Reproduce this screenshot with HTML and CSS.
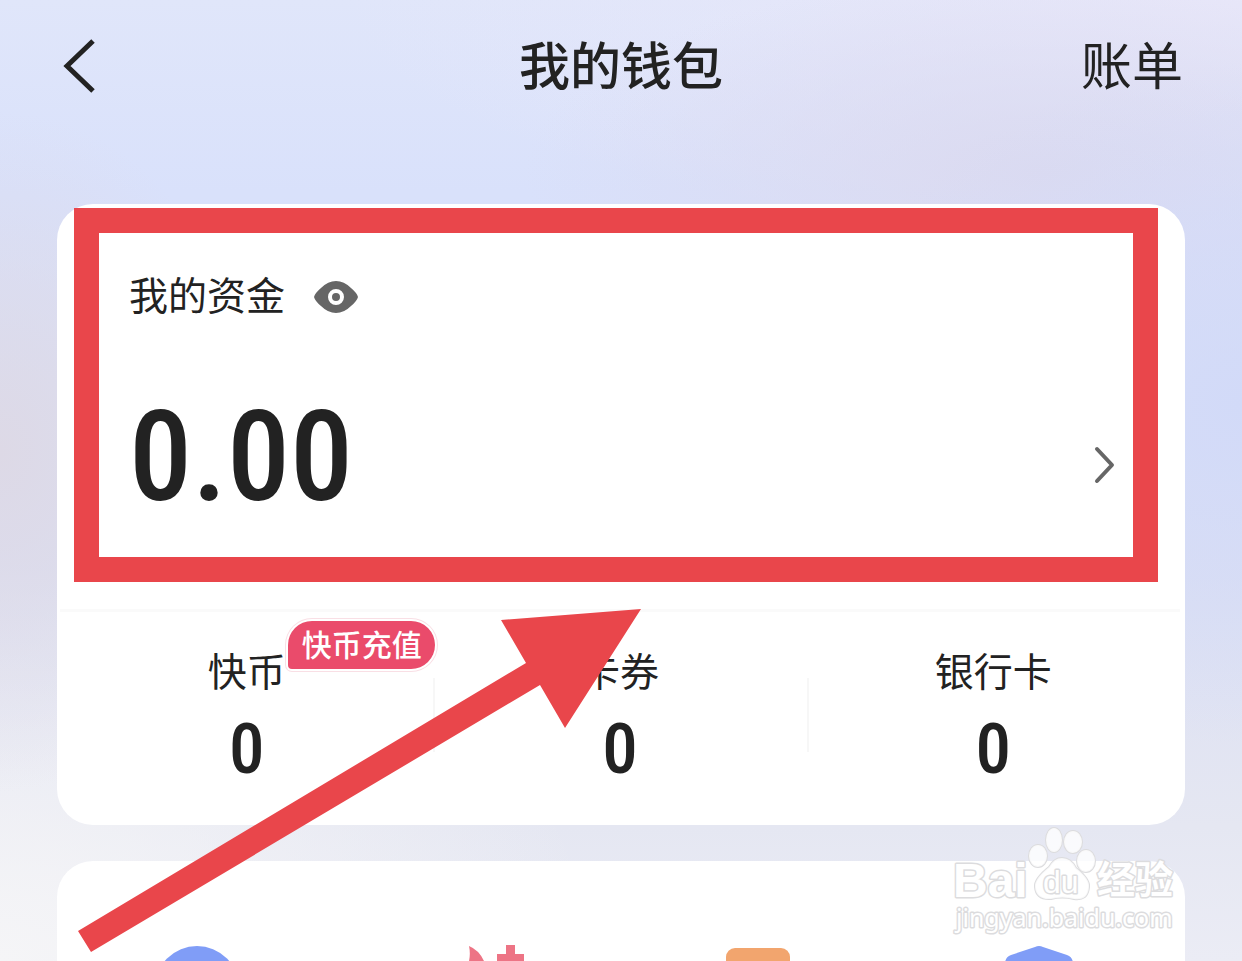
FILE: index.html
```html
<!DOCTYPE html>
<html lang="zh-CN">
<head>
    <meta charset="UTF-8">
    <meta name="viewport" content="width=device-width, initial-scale=1">
    <title>我的钱包</title>
    <link rel="stylesheet" href="styles.css">
</head>
<body>
<div class="page">

    <header class="topbar">
        <button class="back" type="button" aria-label="返回">
            <svg width="40" height="60" viewBox="0 0 40 60"><path d="M36 5 L10 30 L36 55" fill="none" stroke="#222" stroke-width="5"/></svg>
        </button>
        <h1>我的钱包</h1>
        <a class="bill" href="#">账单</a>
    </header>

    <main>
        <section class="card wallet">
            <div class="funds">
                <div class="funds-head">
                    <span>我的资金</span>
                    <button class="eye" type="button" aria-label="隐藏金额">
                        <svg width="44" height="34" viewBox="0 0 44 34">
                            <path d="M0 17 Q1 13 7 8 Q14 1 22 1 Q30 1 37 8 Q43 13 44 17 Q43 21 37 26 Q30 33 22 33 Q14 33 7 26 Q1 21 0 17 Z" fill="#666"/>
                            <circle cx="22" cy="17" r="6" fill="#666" stroke="#fff" stroke-width="4"/>
                        </svg>
                    </button>
                </div>
                <a class="funds-row" href="#" aria-label="资金明细">
                    <span class="amount">0.00</span>
                    <svg width="24" height="40" viewBox="0 0 24 40"><path d="M4 4 L19 20 L4 36" fill="none" stroke="#666" stroke-width="4" stroke-linecap="round" stroke-linejoin="round"/></svg>
                </a>
            </div>

            <div class="assets">
                <a class="asset" href="#">
                    <span class="label">快币<span class="badge">快币充值</span></span>
                    <span class="num">0</span>
                </a>
                <a class="asset" href="#">
                    <span class="label">卡券</span>
                    <span class="num">0</span>
                </a>
                <a class="asset" href="#">
                    <span class="label">银行卡</span>
                    <span class="num">0</span>
                </a>
            </div>

            <!-- marks drawn over the card -->
            <div class="frame"></div>
            <svg class="arrow" width="564" height="344" viewBox="0 0 564 344">
                <path d="M563 0 L423 11 L448 54 L0 322 L13 343 L462 76 L487 119 Z" fill="#e9464b"/>
            </svg>
        </section>

        <section class="card services">
            <svg width="100" height="80" viewBox="0 0 100 80"><circle cx="50" cy="48" r="42" fill="#809df7"/></svg>
            <svg width="100" height="80" viewBox="0 0 100 80">
                <path d="M41 6 Q51 10 56 21 Q58 26 58 34 L36 34 Q44 20 41 6 Z" fill="#ed7485"/>
                <path d="M78 5 H87 V14 H96 V23 H87 V34 H78 V23 H69 V14 H78 Z" fill="#ed7485"/>
            </svg>
            <svg width="100" height="80" viewBox="0 0 100 80"><rect x="18" y="8" width="64" height="60" rx="9" fill="#f2a56e"/></svg>
            <svg width="100" height="80" viewBox="0 0 100 80"><path d="M46 7 Q50 5 54 7 L78 15 Q84 17 84 24 V50 Q80 66 50 78 Q20 66 16 50 V24 Q16 17 22 15 Z" fill="#809df7"/></svg>
        </section>
    </main>

    <svg class="watermark" width="232" height="116" viewBox="0 0 232 116">
        <g class="paw">
            <ellipse cx="93" cy="29" rx="9" ry="11"/>
            <ellipse cx="109" cy="13" rx="8" ry="12"/>
            <ellipse cx="128" cy="15" rx="9" ry="11"/>
            <ellipse cx="141" cy="34" rx="9" ry="11"/>
            <path d="M117 31 Q126 31 131 41 Q145 52 144 60 Q143 74 129 72 Q117 69 106 72 Q91 73 90 60 Q89 52 104 40 Q109 31 117 31 Z"/>
        </g>
        <text class="wm-bai" x="8" y="70">Bai</text>
        <text class="wm-du" x="98" y="66">du</text>
        <text class="wm-cn" x="152" y="66">经验</text>
        <text class="wm-url" x="11" y="100">jingyan.baidu.com</text>
    </svg>

</div>
</body>
</html>
```
FILE: styles.css
```css
* {
    box-sizing: border-box;
}

body {
    margin: 0;
    font-family: "Noto Sans CJK SC", sans-serif;
    color: #222;
}

.page {
    position: relative;
    height: 100vh;
    overflow: hidden;
    padding: 0 57px;
    background:
        radial-gradient(ellipse 260px 340px at 0 47%, #ddd9e6 0%, rgba(221, 217, 230, 0) 100%),
        radial-gradient(ellipse 420px 340px at 100% 42%, #d2daf8 0%, rgba(210, 218, 248, 0) 100%),
        radial-gradient(ellipse 520px 200px at 84% 18%, #dbdaf0 0%, rgba(219, 218, 240, 0) 100%),
        radial-gradient(ellipse 900px 240px at 100% 0, #e8e7f9 0%, rgba(232, 231, 249, 0) 100%),
        radial-gradient(ellipse 600px 420px at 0 100%, #f5f5f7 0%, rgba(245, 245, 247, 0) 100%),
        linear-gradient(#e0e6fa 0, #d9e1fb 20%, #dbdff3 60%, #e5e7f2 86%, #ebecf5 100%);
}

button {
    padding: 0;
    border: none;
    background: none;
    cursor: pointer;
}

a {
    color: inherit;
    text-decoration: none;
}

svg {
    display: block;
}

.topbar {
    display: grid;
    grid-template-columns: 1fr auto 1fr;
    align-items: center;
    height: 132px;
    margin-bottom: 72px;
}

.topbar h1,
.bill {
    margin: 0;
    padding-bottom: 6px;
    font-size: 51px;
    line-height: 72px;
}

.topbar h1 {
    font-weight: 500;
}

.back {
    justify-self: start;
}

.bill {
    justify-self: end;
    padding-right: 2px;
    font-weight: 400;
}

.card {
    position: relative;
    border-radius: 36px;
    background: #fff;
}

.wallet {
    z-index: 1;
    height: 621px;
    margin-bottom: 36px;
}

.funds {
    height: 405px;
    padding: 61px 68px 0 72px;
}

.funds-head {
    display: flex;
    align-items: center;
    gap: 29px;
    font-size: 39px;
    line-height: 56px;
}

.eye {
    padding-top: 8px;
}

.funds-row {
    display: flex;
    align-items: center;
    justify-content: space-between;
    margin-top: 66px;
}

.amount,
.num {
    font-family: "Liberation Sans Narrow", "Roboto Condensed", Roboto, sans-serif;
    font-weight: 500;
}

.amount {
    padding-bottom: 16px;
    font-size: 126px;
    line-height: 140px;
}

.assets {
    display: grid;
    grid-template-columns: repeat(3, 1fr);
    margin: 0 5px 0 3px;
    border-top: 3px solid #fafafa;
}

.asset {
    position: relative;
    display: flex;
    flex-direction: column;
    align-items: center;
    padding-top: 29px;
}

.asset + .asset::before {
    content: "";
    position: absolute;
    left: 0;
    top: 66px;
    width: 2px;
    height: 74px;
    background: #f7f7f7;
}

.label {
    position: relative;
    font-size: 39px;
    line-height: 56px;
}

.badge {
    position: absolute;
    left: 100%;
    bottom: 28px;
    margin-left: 2px;
    padding: 0 13px 4px 14px;
    border-radius: 24px 24px 24px 4px;
    background: #ea4b6b;
    box-shadow: 0 0 0 2px #fff, 0 0 0 3px #f9dfe5;
    color: #fff;
    font-size: 30px;
    font-weight: 500;
    line-height: 44px;
    white-space: nowrap;
}

.num {
    font-size: 71px;
    line-height: 104px;
}

.frame {
    position: absolute;
    top: 4px;
    left: 17px;
    right: 27px;
    height: 374px;
    border: 25px solid #e9464b;
    pointer-events: none;
}

.arrow {
    position: absolute;
    top: 405px;
    left: 21px;
    pointer-events: none;
}

.services {
    display: grid;
    grid-template-columns: repeat(4, 1fr);
    justify-items: center;
    padding: 79px 6px 60px 0;
}

.watermark {
    position: absolute;
    right: 65px;
    bottom: 18px;
    z-index: 2;
    fill: #fff;
    stroke: #dcdcde;
    stroke-width: 3px;
    stroke-linejoin: round;
    paint-order: stroke;
}

.paw {
    fill: rgba(255, 255, 255, 0.8);
    stroke-width: 2px;
}

.wm-bai,
.wm-du {
    font-family: "Liberation Sans", sans-serif;
    font-weight: 700;
}

.wm-bai {
    font-size: 48px;
}

.wm-du {
    font-size: 32px;
    font-weight: 400;
}

.wm-cn {
    font-size: 38px;
    font-weight: 700;
}

.wm-url {
    font-family: "Noto Sans", sans-serif;
    font-size: 25px;
}
```
